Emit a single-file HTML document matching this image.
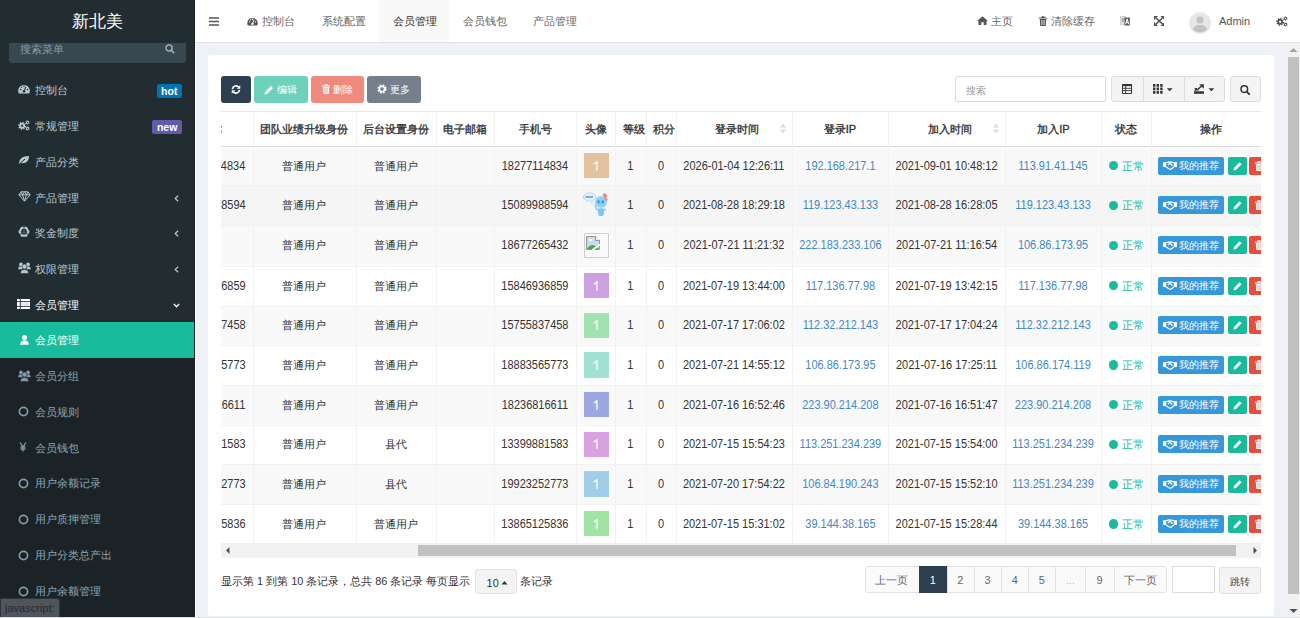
<!DOCTYPE html>
<html><head><meta charset="utf-8"><style>
*{box-sizing:border-box;margin:0;padding:0}
html,body{width:1300px;height:618px;overflow:hidden;background:#eef1f5;font-family:"Liberation Sans",sans-serif;font-size:12px;color:#333}
.a{position:absolute;white-space:nowrap}
#side{position:absolute;left:0;top:0;width:195px;height:618px;background:#222d32;overflow:hidden}
#side .edge{position:absolute;left:194px;top:0;width:1px;height:618px;background:#1a1f22}
#logo{position:absolute;left:0;top:0;width:194px;height:43px;background:#222d32;color:#fff;font-size:17px;text-align:center;line-height:43px;z-index:2}
#sbox{position:absolute;left:9px;top:33px;width:177px;height:30px;background:#374850;border-radius:3px}
.mi{position:absolute;left:0;width:194px;height:36px;color:#b8c7ce;font-size:11.4px}
.mi .t{position:absolute;left:35px;top:11px;line-height:14px}
.mi svg{position:absolute;left:18px;top:12px}
.sub{position:absolute;left:0;top:322px;width:194px;height:296px;background:#1c2326}
.badge{position:absolute;color:#fff;font-weight:bold;font-size:10.5px;line-height:14px;height:14px;border-radius:2px;text-align:center}
.chev{position:absolute;left:172px;top:14px}
#head{position:absolute;left:195px;top:0;width:1105px;height:43px;background:#fff;border-bottom:1px solid #dfe3e8}
.nav{position:absolute;top:13px;line-height:16px;color:#666;font-size:11.4px}
#content{position:absolute;left:195px;top:43px;width:1093px;height:575px;background:#eef1f5;border-left:1px solid #fff;overflow:hidden}
#panel{position:absolute;left:12px;top:12px;width:1066px;height:561px;background:#fff;border-radius:3px}
#vscroll{position:absolute;left:1286px;top:43px;width:14px;height:575px;background:#f1f1f1}
.th{font-weight:normal;-webkit-text-stroke:0.35px #333;text-align:center;font-size:11px;line-height:14px;color:#333}
.td{text-align:center;font-size:10.9px;line-height:14px;color:#333}
.pg{color:#666}
.num{font-size:12px;transform:scaleX(0.915);transform-origin:50% 50%}
</style></head><body>
<div id="side">
<div id="logo">新北美</div>
<div id="sbox"><span class="a" style="left:11px;top:9.5px;color:#8d9ca4;font-size:10.8px;line-height:12px">搜索菜单</span><svg class="a" style="left:156px;top:11px" width="10" height="10" viewBox="0 0 10 10"><circle cx="4" cy="4" r="3.1" fill="none" stroke="#aab7bd" stroke-width="1.3"/><path d="M6.3 6.3L9.2 9.2" stroke="#aab7bd" stroke-width="1.6"/></svg></div>
<div class="mi" style="top:71px;color:#b8c7ce"><div class="a" style="left:0;top:1px;width:40px;height:36px"><svg width="12" height="10" viewBox="0 0 12 10"><path d="M0.8 9.4A5.8 5.8 0 1 1 11.2 9.4Z" fill="#b8c7ce"/><circle cx="6" cy="7.3" r="1.3" fill="#222d32"/><path d="M6 7.3L7.8 2.8" stroke="#222d32" stroke-width="1"/><circle cx="2.6" cy="5.6" r=".75" fill="#222d32"/><circle cx="9.4" cy="5.6" r=".75" fill="#222d32"/><circle cx="6" cy="2.2" r=".75" fill="#222d32"/><circle cx="3.6" cy="3.2" r=".6" fill="#222d32"/></svg></div><span class="t" style="top:12px">控制台</span></div>
<div class="mi" style="top:107px;color:#b8c7ce"><div class="a" style="left:0;top:0.5px;width:40px;height:36px"><svg width="12" height="11" viewBox="0 0 12.5 11"><path d="M7.40 5.80L8.58 6.20L8.30 7.38L7.06 7.21L6.49 7.99L7.04 9.11L6.01 9.75L5.26 8.75L4.30 8.90L3.90 10.08L2.72 9.80L2.89 8.56L2.11 7.99L0.99 8.54L0.35 7.51L1.35 6.76L1.20 5.80L0.02 5.40L0.30 4.22L1.54 4.39L2.11 3.61L1.56 2.49L2.59 1.85L3.34 2.85L4.30 2.70L4.70 1.52L5.88 1.80L5.71 3.04L6.49 3.61L7.61 3.06L8.25 4.09L7.25 4.84ZM5.50 5.80A1.2 1.2 0 1 0 3.10 5.80A1.2 1.2 0 1 0 5.50 5.80ZM11.45 2.30L12.18 2.59L11.92 3.41L11.15 3.21L10.68 3.64L10.79 4.42L9.95 4.60L9.74 3.84L9.12 3.64L8.51 4.13L7.93 3.49L8.48 2.93L8.35 2.30L7.62 2.01L7.88 1.19L8.65 1.39L9.12 0.96L9.01 0.18L9.85 0.00L10.06 0.76L10.67 0.96L11.29 0.47L11.87 1.11L11.32 1.67ZM10.50 2.30A0.6 0.6 0 1 0 9.30 2.30A0.6 0.6 0 1 0 10.50 2.30ZM11.45 8.50L12.18 8.79L11.92 9.61L11.15 9.41L10.68 9.84L10.79 10.62L9.95 10.80L9.74 10.04L9.12 9.84L8.51 10.33L7.93 9.69L8.48 9.13L8.35 8.50L7.62 8.21L7.88 7.39L8.65 7.59L9.12 7.16L9.01 6.38L9.85 6.20L10.06 6.96L10.67 7.16L11.29 6.67L11.87 7.31L11.32 7.87ZM10.50 8.50A0.6 0.6 0 1 0 9.30 8.50A0.6 0.6 0 1 0 10.50 8.50Z" fill="#b8c7ce" fill-rule="evenodd"/></svg></div><span class="t" style="top:12px">常规管理</span></div>
<div class="mi" style="top:143px;color:#b8c7ce"><div class="a" style="left:0;top:0px;width:40px;height:36px"><svg width="12" height="10" viewBox="0 0 12 10"><path d="M1 9C1 4 4 1 11 1C11 6 8 9 3 8Z" fill="#b8c7ce"/><path d="M1.5 9L7 4" stroke="#222d32" stroke-width="1"/></svg></div><span class="t" style="top:12px">产品分类</span></div>
<div class="mi" style="top:179px;color:#b8c7ce"><div class="a" style="left:0;top:0px;width:40px;height:36px"><svg width="13" height="11" viewBox="0 0 13 11"><path d="M3 .8H10L12.2 3.8L6.5 10.2L.8 3.8Z M.8 3.8H12.2 M4.5 3.8L6.5 10 L8.5 3.8 M3 .8L4.5 3.8L6.5 .8L8.5 3.8L10 .8" fill="none" stroke="#b8c7ce" stroke-width="1"/></svg></div><span class="t" style="top:12px">产品管理</span></div>
<div class="mi" style="top:214px;color:#b8c7ce"><div class="a" style="left:0;top:1.5px;width:40px;height:36px"><svg width="12" height="12" viewBox="0 0 12 12" style="top:10.5px"><path d="M3.2 0.8H8.8L11.6 5.8L8.8 10.8H3.2L0.4 5.8Z M4.4 3H7.6L9.2 5.8L7.6 8.6H4.4L2.8 5.8Z" fill="#b8c7ce" fill-rule="evenodd"/><path d="M6 3.2L4 7.4H8Z" fill="#b8c7ce" opacity=".35"/><path d="M6 1L6 4M2 8.5L4.3 7M10 8.5L7.7 7" stroke="#222d32" stroke-width=".8"/></svg></div><span class="t" style="top:12px">奖金制度</span></div>
<div class="mi" style="top:250px;color:#b8c7ce"><div class="a" style="left:0;top:-0.5px;width:40px;height:36px"><svg width="13" height="12" viewBox="0 0 13 12" style="top:12.5px"><circle cx="3" cy="2.4" r="1.9" fill="#b8c7ce"/><circle cx="10" cy="2.4" r="1.9" fill="#b8c7ce"/><path d="M0.2 7.2C0.2 5 1 4.5 3 4.5S4.5 5 4.5 7.2Z M8.5 7.2C8.5 5 9 4.5 10 4.5S12.8 5 12.8 7.2Z" fill="#b8c7ce"/><circle cx="6.5" cy="4.6" r="2.5" fill="#b8c7ce" stroke="#222d32" stroke-width=".6"/><path d="M2.5 11.6C2.5 8.5 4 7.6 6.5 7.6S10.5 8.5 10.5 11.6Z" fill="#b8c7ce" stroke="#222d32" stroke-width=".6"/></svg></div><span class="t" style="top:12px">权限管理</span></div>
<div class="mi" style="top:286px;color:#fff"><div class="a" style="left:0;top:1px;width:40px;height:36px"><svg width="13" height="10" viewBox="0 0 13 10" style="left:17.2px"><path d="M0 0H13V10H0Z" fill="#fff"/><path d="M0 2.6H13M0 7.4H13M3.3 0V10" stroke="#222d32" stroke-width="0.9"/><path d="M4 5H12.5" stroke="#222d32" stroke-width=".5" opacity=".5"/></svg></div><span class="t" style="top:12px">会员管理</span></div>
<div class="badge" style="left:156.5px;top:84px;width:25.5px;background:#0073b7">hot</div>
<div class="badge" style="left:152.3px;top:120px;width:29.7px;background:#605ca8">new</div>
<svg class="a" style="left:174px;top:195px" width="5" height="7" viewBox="0 0 5 7"><path d="M4.2 .8L1.2 3.5L4.2 6.2" fill="none" stroke="#b8c7ce" stroke-width="1.2"/></svg>
<svg class="a" style="left:174px;top:230px" width="5" height="7" viewBox="0 0 5 7"><path d="M4.2 .8L1.2 3.5L4.2 6.2" fill="none" stroke="#b8c7ce" stroke-width="1.2"/></svg>
<svg class="a" style="left:174px;top:266px" width="5" height="7" viewBox="0 0 5 7"><path d="M4.2 .8L1.2 3.5L4.2 6.2" fill="none" stroke="#b8c7ce" stroke-width="1.2"/></svg>
<svg class="a" style="left:173px;top:303px" width="7" height="5" viewBox="0 0 7 5"><path d="M.8 .9L3.5 3.8L6.2 .9" fill="none" stroke="#fff" stroke-width="1.3"/></svg>
<div class="sub"></div>
<div class="a" style="left:0;top:322px;width:194px;height:36px;background:#18bc9c"></div>
<div class="mi" style="top:322.00px;color:#fff"><svg width="9" height="10" viewBox="0 0 9 10" style="left:19.5px;top:13px"><ellipse cx="4.5" cy="2.6" rx="2.5" ry="2.6" fill="#fff"/><path d="M0.2 9.8C0.2 6.5 1.5 5.5 4.5 5.5S8.8 6.5 8.8 9.8Z" fill="#fff"/></svg><span class="t">会员管理</span></div>
<div class="mi" style="top:357.86px;color:#8aa4af"><svg width="13" height="12" viewBox="0 0 13 12" style="top:12.5px"><circle cx="3" cy="2.4" r="1.9" fill="#7f9ba8"/><circle cx="10" cy="2.4" r="1.9" fill="#7f9ba8"/><path d="M0.2 7.2C0.2 5 1 4.5 3 4.5S4.5 5 4.5 7.2Z M8.5 7.2C8.5 5 9 4.5 10 4.5S12.8 5 12.8 7.2Z" fill="#7f9ba8"/><circle cx="6.5" cy="4.6" r="2.5" fill="#7f9ba8" stroke="#222d32" stroke-width=".6"/><path d="M2.5 11.6C2.5 8.5 4 7.6 6.5 7.6S10.5 8.5 10.5 11.6Z" fill="#7f9ba8" stroke="#222d32" stroke-width=".6"/></svg><span class="t">会员分组</span></div>
<div class="mi" style="top:393.72px;color:#8aa4af"><svg width="11" height="11" viewBox="0 0 11 11" style="top:12.5px;left:17.5px"><circle cx="5.5" cy="5.5" r="4.1" fill="none" stroke="#7f9ba8" stroke-width="1.7"/></svg><span class="t">会员规则</span></div>
<div class="mi" style="top:429.58px;color:#8aa4af"><svg width="10" height="10" viewBox="0 0 10 10"><path d="M2 .5L5 5L8 .5M5 5V9.5M2.5 5H7.5M2.5 7H7.5" fill="none" stroke="#7f9ba8" stroke-width="1.3"/></svg><span class="t">会员钱包</span></div>
<div class="mi" style="top:465.44px;color:#8aa4af"><svg width="11" height="11" viewBox="0 0 11 11" style="top:12.5px;left:17.5px"><circle cx="5.5" cy="5.5" r="4.1" fill="none" stroke="#7f9ba8" stroke-width="1.7"/></svg><span class="t">用户余额记录</span></div>
<div class="mi" style="top:501.30px;color:#8aa4af"><svg width="11" height="11" viewBox="0 0 11 11" style="top:12.5px;left:17.5px"><circle cx="5.5" cy="5.5" r="4.1" fill="none" stroke="#7f9ba8" stroke-width="1.7"/></svg><span class="t">用户质押管理</span></div>
<div class="mi" style="top:537.16px;color:#8aa4af"><svg width="11" height="11" viewBox="0 0 11 11" style="top:12.5px;left:17.5px"><circle cx="5.5" cy="5.5" r="4.1" fill="none" stroke="#7f9ba8" stroke-width="1.7"/></svg><span class="t">用户分类总产出</span></div>
<div class="mi" style="top:573.02px;color:#8aa4af"><svg width="11" height="11" viewBox="0 0 11 11" style="top:12.5px;left:17.5px"><circle cx="5.5" cy="5.5" r="4.1" fill="none" stroke="#7f9ba8" stroke-width="1.7"/></svg><span class="t">用户余额管理</span></div>
<div class="edge"></div>
</div>
<div class="a" style="left:0;top:598px;width:60px;height:20px;background:#50545b;border:1px solid #30343a;border-bottom:0;border-top-right-radius:3px;color:#262a30;font-size:11px;line-height:18px;padding-left:4px;z-index:10">javascript:</div>
<div class="a" style="left:0;top:617px;width:1300px;height:1px;background:#dcdfe2;z-index:11"></div>
<div id="head">
<svg class="a" style="left:14px;top:17px" width="10" height="9" viewBox="0 0 10 9"><path d="M0 1H10M0 4.5H10M0 8H10" stroke="#555" stroke-width="1.6"/></svg>
<svg class="a" style="left:52px;top:17px" width="11" height="9" viewBox="0 0 12 10"><path d="M0.8 9.4A5.8 5.8 0 1 1 11.2 9.4Z" fill="#555"/><circle cx="6" cy="7.6" r="1.3" fill="#fff"/><path d="M6 7.5L7.8 3" stroke="#fff" stroke-width="1"/><circle cx="2.8" cy="5.4" r=".8" fill="#fff"/><circle cx="9.2" cy="5.4" r=".8" fill="#fff"/><circle cx="6" cy="2.4" r=".8" fill="#fff"/><circle cx="3.8" cy="3.2" r=".6" fill="#fff"/></svg>
<div class="a" style="left:184px;top:0;width:70px;height:42px;background:#f9f9f9"></div>
<div class="nav a" style="left:67px;color:#666">控制台</div>
<div class="nav a" style="left:127px;color:#666">系统配置</div>
<div class="nav a" style="left:198px;color:#333">会员管理</div>
<div class="nav a" style="left:268px;color:#666">会员钱包</div>
<div class="nav a" style="left:338px;color:#666">产品管理</div>
<svg class="a" style="left:782px;top:16px" width="11" height="9" viewBox="0 0 11 9"><path d="M5.5 0.3L0 5H1.5V9H4.3V6.2H6.7V9H9.5V5H11Z" fill="#555"/></svg>
<div class="nav a" style="left:796px">主页</div>
<svg class="a" style="left:844px;top:16px" width="8" height="10" viewBox="0 0 8 10"><path d="M0 1.5H8V2.6H0Z M2.5 0.3H5.5V1.5H2.5Z M0.8 3H7.2L6.8 10H1.2Z" fill="#555"/><path d="M2.7 4V9M4 4V9M5.3 4V9" stroke="#fff" stroke-width=".6"/></svg>
<div class="nav a" style="left:856px">清除缓存</div>
<svg class="a" style="left:924.5px;top:15.3px" width="10" height="11" viewBox="0 0 10 11"><path d="M0.3 1.5H5.5V9.5H0.3Z" fill="#e2e2e2" stroke="#bbb" stroke-width=".6"/><path d="M1.5 4H4.3M2.9 3V7M1.6 7L4.2 5" stroke="#888" stroke-width=".7" fill="none"/><path d="M4.5 2.5H9.8V10.5H4.5Z" fill="#555"/><path d="M3 0.3L5 2.5" stroke="#bbb" stroke-width=".6"/><path d="M5.6 9.3L7.15 3.8L8.7 9.3M6.1 7.6H8.2" fill="none" stroke="#fff" stroke-width="1"/></svg>
<svg class="a" style="left:958.8px;top:16px" width="10.5" height="10" viewBox="0 0 10.5 10"><path d="M2 2L8.5 8M8.5 2L2 8" stroke="#555" stroke-width="1.7"/><path d="M0 0H4.2L0 4Z M10.5 0V4L6.3 0Z M0 10V6L4.2 10Z M10.5 10H6.3L10.5 6Z" fill="#555"/></svg>
<svg class="a" style="left:994px;top:12px" width="22" height="22" viewBox="0 0 22 22"><circle cx="11" cy="11" r="10.8" fill="#e6e6e6"/><circle cx="11" cy="8" r="3.6" fill="#c2c2c2"/><path d="M3.8 17.5C5 13.8 8 13 11 13S17 13.8 18.2 17.5A10.8 10.8 0 0 1 3.8 17.5Z" fill="#c2c2c2"/></svg>
<div class="a" style="left:1024px;top:13px;line-height:16px;font-size:11px;color:#555">Admin</div>
<div class="a" style="left:1080.5px;top:15.5px"><svg width="12" height="11" viewBox="0 0 12.5 11"><path d="M7.40 5.80L8.58 6.20L8.30 7.38L7.06 7.21L6.49 7.99L7.04 9.11L6.01 9.75L5.26 8.75L4.30 8.90L3.90 10.08L2.72 9.80L2.89 8.56L2.11 7.99L0.99 8.54L0.35 7.51L1.35 6.76L1.20 5.80L0.02 5.40L0.30 4.22L1.54 4.39L2.11 3.61L1.56 2.49L2.59 1.85L3.34 2.85L4.30 2.70L4.70 1.52L5.88 1.80L5.71 3.04L6.49 3.61L7.61 3.06L8.25 4.09L7.25 4.84ZM5.50 5.80A1.2 1.2 0 1 0 3.10 5.80A1.2 1.2 0 1 0 5.50 5.80ZM11.45 2.30L12.18 2.59L11.92 3.41L11.15 3.21L10.68 3.64L10.79 4.42L9.95 4.60L9.74 3.84L9.12 3.64L8.51 4.13L7.93 3.49L8.48 2.93L8.35 2.30L7.62 2.01L7.88 1.19L8.65 1.39L9.12 0.96L9.01 0.18L9.85 0.00L10.06 0.76L10.67 0.96L11.29 0.47L11.87 1.11L11.32 1.67ZM10.50 2.30A0.6 0.6 0 1 0 9.30 2.30A0.6 0.6 0 1 0 10.50 2.30ZM11.45 8.50L12.18 8.79L11.92 9.61L11.15 9.41L10.68 9.84L10.79 10.62L9.95 10.80L9.74 10.04L9.12 9.84L8.51 10.33L7.93 9.69L8.48 9.13L8.35 8.50L7.62 8.21L7.88 7.39L8.65 7.59L9.12 7.16L9.01 6.38L9.85 6.20L10.06 6.96L10.67 7.16L11.29 6.67L11.87 7.31L11.32 7.87ZM10.50 8.50A0.6 0.6 0 1 0 9.30 8.50A0.6 0.6 0 1 0 10.50 8.50Z" fill="#555" fill-rule="evenodd"/></svg></div>
</div>
<div id="content"><div id="panel">
<div class="a" style="left:13px;top:21px;width:30px;height:26.5px;background:#2c3e50;border-radius:3px;"><svg class="a" style="left:9.6px;top:8.8px" width="10" height="9" viewBox="0 0 11 10"><path d="M1.5 4.5A4 4 0 0 1 8.6 2.6" fill="none" stroke="#fff" stroke-width="1.8"/><path d="M10.2 0.3V4.2H6.3Z" fill="#fff"/><path d="M9.5 5.5A4 4 0 0 1 2.4 7.4" fill="none" stroke="#fff" stroke-width="1.8"/><path d="M0.8 9.7V5.8H4.7Z" fill="#fff"/></svg></div>
<div class="a" style="left:46px;top:21px;width:54px;height:26.5px;background:#6dd1bc;border-radius:3px;"><svg class="a" style="left:10px;top:9px" width="10" height="10" viewBox="0 0 10 10"><path d="M0.5 9.5L1 7L7 1L9 3L3 9Z" fill="#fff"/></svg><span class="a" style="left:23px;top:6.5px;color:#fff;font-size:10.3px;line-height:14px">编辑</span></div>
<div class="a" style="left:103px;top:21px;width:53px;height:26.5px;background:#f0897e;border-radius:3px;"><svg class="a" style="left:11px;top:8px" width="8" height="10" viewBox="0 0 8 10"><path d="M0 1.5H8V2.6H0Z M2.5 0.3H5.5V1.5H2.5Z M0.8 3H7.2L6.8 10H1.2Z" fill="#fff"/><path d="M2.7 4V9M4 4V9M5.3 4V9" stroke="#f0897e" stroke-width=".6"/></svg><span class="a" style="left:22px;top:6.5px;color:#fff;font-size:10.3px;line-height:14px">删除</span></div>
<div class="a" style="left:159px;top:21px;width:54px;height:26.5px;background:#76808c;border-radius:3px;"><svg class="a" style="left:10px;top:8px" width="10" height="10" viewBox="0 0 10 10"><circle cx="5" cy="5" r="3.3" fill="none" stroke="#fff" stroke-width="2.6" stroke-dasharray="1.6 1"/><circle cx="5" cy="5" r="2.6" fill="none" stroke="#fff" stroke-width="1.4"/></svg><span class="a" style="left:23px;top:6.5px;color:#fff;font-size:10.3px;line-height:14px">更多</span></div>
<div class="a" style="left:746.8px;top:21.200000000000003px;width:151.6px;height:26.1px;border:1px solid #d6dbe3;border-radius:2px;background:#fff"><span class="a" style="left:10.3px;top:7.5px;color:#999;font-size:10.3px;line-height:12px">搜索</span></div>
<div class="a" style="left:902.5px;top:21.299999999999997px;width:114px;height:26.2px;border:1px solid #ddd;background:#f4f4f4;border-radius:3px"></div>
<div class="a" style="left:934.5px;top:21.299999999999997px;width:1px;height:26px;background:#ddd"></div>
<div class="a" style="left:975.5px;top:21.299999999999997px;width:1px;height:26px;background:#ddd"></div>
<svg class="a" style="left:914.3px;top:29px" width="10" height="10" viewBox="0 0 10 10"><path d="M0.5 0.5H9.5V9.5H0.5Z" fill="none" stroke="#333" stroke-width="1"/><path d="M0.5 1.2H9.5" stroke="#333" stroke-width="1.8"/><path d="M1 4.3H9M1 6.6H9M3.6 2V9" stroke="#333" stroke-width=".9"/></svg>
<svg class="a" style="left:944.7px;top:29.299999999999997px" width="20" height="10" viewBox="0 0 20 10"><path d="M0 0H2.4V2.8H0ZM3.6 0H6V2.8H3.6ZM7.2 0H9.6V2.8H7.2ZM0 3.5H2.4V6.3H0ZM3.6 3.5H6V6.3H3.6ZM7.2 3.5H9.6V6.3H7.2ZM0 7H2.4V9.8H0ZM3.6 7H6V9.8H3.6ZM7.2 7H9.6V9.8H7.2Z" fill="#333"/><path d="M13.8 4.3H19.6L16.7 7.3Z" fill="#333"/></svg>
<svg class="a" style="left:985.5999999999999px;top:29.200000000000003px" width="21" height="10" viewBox="0 0 21 10"><path d="M0 7.3H10V9.8H0Z" fill="#333"/><path d="M1.3 7.3V4.5H2.6V6H4.5" fill="none" stroke="#333" stroke-width="1.1"/><path d="M3.5 5.8L7.8 1.8" stroke="#333" stroke-width="1.5"/><path d="M5.2 0.2H9.8V4.8Z" fill="#333"/><path d="M14.5 4.3H20.3L17.4 7.3Z" fill="#333"/></svg>
<div class="a" style="left:1021.5px;top:21.299999999999997px;width:31.5px;height:26.2px;border:1px solid #ddd;background:#f4f4f4;border-radius:3px"><svg class="a" style="left:9.3px;top:8.1px" width="11" height="10" viewBox="0 0 11 10"><circle cx="4.3" cy="4.1" r="3.3" fill="none" stroke="#333" stroke-width="1.5"/><path d="M6.6 6.6L9.8 9.6" stroke="#333" stroke-width="1.9"/></svg></div>
<div class="a" style="left:13px;top:56px;width:1040px;height:432px;overflow:hidden">
<div class="a" style="left:0;top:0;width:1040px;height:1px;background:#e8e8e8"></div>
<div class="a" style="left:0;top:35.00px;width:1040px;height:39.00px;background:#f9f9f9;border-top:1px solid #f1f1f1"></div>
<div class="a" style="left:0;top:74.00px;width:1040px;height:40.30px;background:#f5f5f5;border-top:1px solid #f1f1f1"></div>
<div class="a" style="left:0;top:114.30px;width:1040px;height:40.20px;background:#f9f9f9;border-top:1px solid #f1f1f1"></div>
<div class="a" style="left:0;top:154.50px;width:1040px;height:40.00px;background:#fff;border-top:1px solid #f1f1f1"></div>
<div class="a" style="left:0;top:194.50px;width:1040px;height:39.80px;background:#f9f9f9;border-top:1px solid #f1f1f1"></div>
<div class="a" style="left:0;top:234.30px;width:1040px;height:39.30px;background:#fff;border-top:1px solid #f1f1f1"></div>
<div class="a" style="left:0;top:273.60px;width:1040px;height:39.90px;background:#f9f9f9;border-top:1px solid #f1f1f1"></div>
<div class="a" style="left:0;top:313.50px;width:1040px;height:39.70px;background:#fff;border-top:1px solid #f1f1f1"></div>
<div class="a" style="left:0;top:353.20px;width:1040px;height:39.80px;background:#f9f9f9;border-top:1px solid #f1f1f1"></div>
<div class="a" style="left:0;top:393.00px;width:1040px;height:39.60px;background:#fff;border-top:1px solid #f1f1f1"></div>
<div class="a" style="left:0;top:34.5px;width:1040px;height:1.5px;background:#dcdcdc"></div>
<div class="a" style="left:32.2px;top:0;width:1px;height:432px;background:#f2f2f2"></div>
<div class="a" style="left:134.5px;top:0;width:1px;height:432px;background:#f2f2f2"></div>
<div class="a" style="left:215.2px;top:0;width:1px;height:432px;background:#f2f2f2"></div>
<div class="a" style="left:273.4px;top:0;width:1px;height:432px;background:#f2f2f2"></div>
<div class="a" style="left:355.2px;top:0;width:1px;height:432px;background:#f2f2f2"></div>
<div class="a" style="left:394.4px;top:0;width:1px;height:432px;background:#f2f2f2"></div>
<div class="a" style="left:424.8px;top:0;width:1px;height:432px;background:#f2f2f2"></div>
<div class="a" style="left:454.7px;top:0;width:1px;height:432px;background:#f2f2f2"></div>
<div class="a" style="left:570.5px;top:0;width:1px;height:432px;background:#f2f2f2"></div>
<div class="a" style="left:667.3px;top:0;width:1px;height:432px;background:#f2f2f2"></div>
<div class="a" style="left:784.4px;top:0;width:1px;height:432px;background:#f2f2f2"></div>
<div class="a" style="left:880.4px;top:0;width:1px;height:432px;background:#f2f2f2"></div>
<div class="a" style="left:929.6px;top:0;width:1px;height:432px;background:#f2f2f2"></div>
<div class="a th" style="left:-21px;top:11px;text-align:left">昵称</div>
<div class="a th" style="left:32.2px;top:11px;width:102.3px">团队业绩升级身份</div>
<div class="a th" style="left:134.5px;top:11px;width:80.7px">后台设置身份</div>
<div class="a th" style="left:215.2px;top:11px;width:58.2px">电子邮箱</div>
<div class="a th" style="left:273.4px;top:11px;width:81.8px">手机号</div>
<div class="a th" style="left:355.2px;top:11px;width:39.2px">头像</div>
<div class="a th" style="left:401.9px;top:11px;text-align:left">等级</div>
<div class="a th" style="left:432.3px;top:11px;text-align:left">积分</div>
<div class="a th" style="left:457.7px;top:11px;width:115.8px">登录时间</div>
<div class="a th" style="left:570.5px;top:11px;width:96.8px">登录IP</div>
<div class="a th" style="left:670.3px;top:11px;width:117.1px">加入时间</div>
<div class="a th" style="left:784.4px;top:11px;width:96.0px">加入IP</div>
<div class="a th" style="left:880.4px;top:11px;width:49.2px">状态</div>
<div class="a th" style="left:929.6px;top:11px;width:121.4px">操作</div>
<svg class="a" style="left:559px;top:12px" width="6" height="11" viewBox="0 0 6 11"><path d="M0 4.5L3 0.5L6 4.5Z M0 6.5L3 10.5L6 6.5Z" fill="#dcdcdc"/></svg>
<svg class="a" style="left:772px;top:12px" width="6" height="11" viewBox="0 0 6 11"><path d="M0 4.5L3 0.5L6 4.5Z M0 6.5L3 10.5L6 6.5Z" fill="#dcdcdc"/></svg>
<div class="a td num" style="left:-50.0px;top:47.5px;width:82.2px;">18277114834</div>
<div class="a td" style="left:32.2px;top:47.5px;width:102.3px;">普通用户</div>
<div class="a td" style="left:134.5px;top:47.5px;width:80.7px;">普通用户</div>
<div class="a td num" style="left:273.4px;top:47.5px;width:81.8px;">18277114834</div>
<div class="a td num" style="left:394.4px;top:47.5px;width:30.4px;">1</div>
<div class="a td num" style="left:424.8px;top:47.5px;width:29.9px;">0</div>
<div class="a td num" style="left:454.7px;top:47.5px;width:115.8px;">2026-01-04 12:26:11</div>
<div class="a td num" style="left:570.5px;top:47.5px;width:96.8px;color:#4288c2">192.168.217.1</div>
<div class="a td num" style="left:667.3px;top:47.5px;width:117.1px;">2021-09-01 10:48:12</div>
<div class="a td num" style="left:784.4px;top:47.5px;width:96.0px;color:#4288c2">113.91.41.145</div>
<div class="a" style="left:362.6px;top:41.8px;width:25.4px;height:25.4px;background:#e2c19e"><svg class="a" style="left:9.5px;top:7.8px" width="6" height="10" viewBox="0 0 6 10"><path d="M3.3 0.2H4.6V9.8H3.3V2.2Q2.3 3.2 0.6 3.6V2.4Q2.4 1.7 3.3 0.2Z" fill="#fff"/></svg></div>
<div class="a" style="left:887.6px;top:49.9px;width:9.4px;height:9.4px;border-radius:50%;background:#18bc9c"></div>
<div class="a td" style="left:900.5px;top:47.5px;color:#18bc9c">正常</div>
<div class="a" style="left:937.0px;top:45.5px;width:66px;height:18px;background:#3498db;border-radius:2px"><svg class="a" style="left:5px;top:4.5px" width="14" height="9" viewBox="0 0 14 9"><path d="M0 1.2H2.5V6H0Z M11.5 1.2H14V6H11.5Z" fill="#fff"/><path d="M2.5 2L5.5 0.8L8.5 1.2L11.5 2V5.5L8 8.2H6.5L2.5 5.5Z" fill="none" stroke="#fff" stroke-width="1.3"/><path d="M4.8 4L7 2L9.5 4.8" fill="none" stroke="#fff" stroke-width="1.2"/></svg><span class="a" style="left:20.8px;top:2.3px;color:#fff;font-size:10.3px;line-height:14px">我的推荐</span></div>
<div class="a" style="left:1006.5px;top:45.5px;width:19px;height:18px;background:#18bc9c;border-radius:2px"><svg class="a" style="left:5px;top:4px" width="9" height="10" viewBox="0 0 9 10"><path d="M0.5 9.5L1 7L6.5 1.3L8.5 3.3L3 9Z" fill="#fff"/></svg></div>
<div class="a" style="left:1028.0px;top:45.5px;width:19px;height:18px;background:#e74c3c;border-radius:2px"><svg class="a" style="left:5.5px;top:4px" width="8" height="10" viewBox="0 0 8 10"><path d="M0 1.5H8V2.6H0Z M2.5 0.3H5.5V1.5H2.5Z M0.8 3H7.2L6.8 10H1.2Z" fill="#fff"/><path d="M2.7 4V9M4 4V9M5.3 4V9" stroke="#f0a090" stroke-width=".7"/></svg></div>
<div class="a td num" style="left:-50.0px;top:87.2px;width:82.2px;">15089988594</div>
<div class="a td" style="left:32.2px;top:87.2px;width:102.3px;">普通用户</div>
<div class="a td" style="left:134.5px;top:87.2px;width:80.7px;">普通用户</div>
<div class="a td num" style="left:273.4px;top:87.2px;width:81.8px;">15089988594</div>
<div class="a td num" style="left:394.4px;top:87.2px;width:30.4px;">1</div>
<div class="a td num" style="left:424.8px;top:87.2px;width:29.9px;">0</div>
<div class="a td num" style="left:454.7px;top:87.2px;width:115.8px;">2021-08-28 18:29:18</div>
<div class="a td num" style="left:570.5px;top:87.2px;width:96.8px;color:#4288c2">119.123.43.133</div>
<div class="a td num" style="left:667.3px;top:87.2px;width:117.1px;">2021-08-28 16:28:05</div>
<div class="a td num" style="left:784.4px;top:87.2px;width:96.0px;color:#4288c2">119.123.43.133</div>
<svg class="a" style="left:359.0px;top:78.2px" width="32" height="32" viewBox="0 0 32 32"><ellipse cx="9.5" cy="8" rx="6" ry="4.2" fill="#e3f1fb" stroke="#a9d2ef" stroke-width=".8"/><path d="M5.5 8H13" stroke="#3a6fd8" stroke-width="1.1"/><circle cx="12" cy="13.5" r="1.2" fill="#cfe6f8"/><circle cx="13.5" cy="16" r=".8" fill="#cfe6f8"/><circle cx="21" cy="13" r="6" fill="#8fd0f5" stroke="#bfe5fa" stroke-width=".8"/><ellipse cx="18.5" cy="12.8" rx="1.2" ry="1.6" fill="#3a8de0"/><ellipse cx="22.8" cy="12.8" rx="1.2" ry="1.6" fill="#3a8de0"/><path d="M22.5 5.5L25 4L27.5 7L26 8.5L28 11L26 12L24.5 9Z" fill="#e8857c"/><path d="M17.5 20Q21 18.5 24.5 20L23.5 26.5Q21 28 18.5 26.5Z" fill="#7cc6f2"/><path d="M16 21L18 20M26 21L24 20M15.5 15.5Q15 19 17 20" stroke="#8fd0f5" stroke-width="1.6" fill="none"/></svg>
<div class="a" style="left:887.6px;top:89.6px;width:9.4px;height:9.4px;border-radius:50%;background:#18bc9c"></div>
<div class="a td" style="left:900.5px;top:87.2px;color:#18bc9c">正常</div>
<div class="a" style="left:937.0px;top:85.2px;width:66px;height:18px;background:#3498db;border-radius:2px"><svg class="a" style="left:5px;top:4.5px" width="14" height="9" viewBox="0 0 14 9"><path d="M0 1.2H2.5V6H0Z M11.5 1.2H14V6H11.5Z" fill="#fff"/><path d="M2.5 2L5.5 0.8L8.5 1.2L11.5 2V5.5L8 8.2H6.5L2.5 5.5Z" fill="none" stroke="#fff" stroke-width="1.3"/><path d="M4.8 4L7 2L9.5 4.8" fill="none" stroke="#fff" stroke-width="1.2"/></svg><span class="a" style="left:20.8px;top:2.3px;color:#fff;font-size:10.3px;line-height:14px">我的推荐</span></div>
<div class="a" style="left:1006.5px;top:85.2px;width:19px;height:18px;background:#18bc9c;border-radius:2px"><svg class="a" style="left:5px;top:4px" width="9" height="10" viewBox="0 0 9 10"><path d="M0.5 9.5L1 7L6.5 1.3L8.5 3.3L3 9Z" fill="#fff"/></svg></div>
<div class="a" style="left:1028.0px;top:85.2px;width:19px;height:18px;background:#e74c3c;border-radius:2px"><svg class="a" style="left:5.5px;top:4px" width="8" height="10" viewBox="0 0 8 10"><path d="M0 1.5H8V2.6H0Z M2.5 0.3H5.5V1.5H2.5Z M0.8 3H7.2L6.8 10H1.2Z" fill="#fff"/><path d="M2.7 4V9M4 4V9M5.3 4V9" stroke="#f0a090" stroke-width=".7"/></svg></div>
<div class="a td num" style="left:-50.0px;top:127.4px;width:82.2px;"></div>
<div class="a td" style="left:32.2px;top:127.4px;width:102.3px;">普通用户</div>
<div class="a td" style="left:134.5px;top:127.4px;width:80.7px;">普通用户</div>
<div class="a td num" style="left:273.4px;top:127.4px;width:81.8px;">18677265432</div>
<div class="a td num" style="left:394.4px;top:127.4px;width:30.4px;">1</div>
<div class="a td num" style="left:424.8px;top:127.4px;width:29.9px;">0</div>
<div class="a td num" style="left:454.7px;top:127.4px;width:115.8px;">2021-07-21 11:21:32</div>
<div class="a td num" style="left:570.5px;top:127.4px;width:96.8px;color:#4288c2">222.183.233.106</div>
<div class="a td num" style="left:667.3px;top:127.4px;width:117.1px;">2021-07-21 11:16:54</div>
<div class="a td num" style="left:784.4px;top:127.4px;width:96.0px;color:#4288c2">106.86.173.95</div>
<div class="a" style="left:362.6px;top:121.6px;width:25.4px;height:25.8px;border:1px solid #cdcdcd;border-radius:1px;background:#fafafa"><svg class="a" style="left:1px;top:2px" width="15" height="14" viewBox="0 0 15 14"><path d="M0.5 0.5H9.5L13.5 4.5V13.5H0.5Z" fill="#c5dcf5" stroke="#8a8a8a" stroke-width=".9"/><path d="M9.5 0.5V4.5H13.5" fill="#fff" stroke="#8a8a8a" stroke-width=".9"/><ellipse cx="4.5" cy="4" rx="2" ry=".9" fill="#fff"/><path d="M0.9 13.1Q4 7.5 8.5 9.5L13.1 13.1Z" fill="#4cae3a"/><path d="M13.8 8.5L6.5 14" stroke="#fff" stroke-width="1.6"/></svg></div>
<div class="a" style="left:887.6px;top:129.8px;width:9.4px;height:9.4px;border-radius:50%;background:#18bc9c"></div>
<div class="a td" style="left:900.5px;top:127.4px;color:#18bc9c">正常</div>
<div class="a" style="left:937.0px;top:125.4px;width:66px;height:18px;background:#3498db;border-radius:2px"><svg class="a" style="left:5px;top:4.5px" width="14" height="9" viewBox="0 0 14 9"><path d="M0 1.2H2.5V6H0Z M11.5 1.2H14V6H11.5Z" fill="#fff"/><path d="M2.5 2L5.5 0.8L8.5 1.2L11.5 2V5.5L8 8.2H6.5L2.5 5.5Z" fill="none" stroke="#fff" stroke-width="1.3"/><path d="M4.8 4L7 2L9.5 4.8" fill="none" stroke="#fff" stroke-width="1.2"/></svg><span class="a" style="left:20.8px;top:2.3px;color:#fff;font-size:10.3px;line-height:14px">我的推荐</span></div>
<div class="a" style="left:1006.5px;top:125.4px;width:19px;height:18px;background:#18bc9c;border-radius:2px"><svg class="a" style="left:5px;top:4px" width="9" height="10" viewBox="0 0 9 10"><path d="M0.5 9.5L1 7L6.5 1.3L8.5 3.3L3 9Z" fill="#fff"/></svg></div>
<div class="a" style="left:1028.0px;top:125.4px;width:19px;height:18px;background:#e74c3c;border-radius:2px"><svg class="a" style="left:5.5px;top:4px" width="8" height="10" viewBox="0 0 8 10"><path d="M0 1.5H8V2.6H0Z M2.5 0.3H5.5V1.5H2.5Z M0.8 3H7.2L6.8 10H1.2Z" fill="#fff"/><path d="M2.7 4V9M4 4V9M5.3 4V9" stroke="#f0a090" stroke-width=".7"/></svg></div>
<div class="a td num" style="left:-50.0px;top:167.5px;width:82.2px;">15846936859</div>
<div class="a td" style="left:32.2px;top:167.5px;width:102.3px;">普通用户</div>
<div class="a td" style="left:134.5px;top:167.5px;width:80.7px;">普通用户</div>
<div class="a td num" style="left:273.4px;top:167.5px;width:81.8px;">15846936859</div>
<div class="a td num" style="left:394.4px;top:167.5px;width:30.4px;">1</div>
<div class="a td num" style="left:424.8px;top:167.5px;width:29.9px;">0</div>
<div class="a td num" style="left:454.7px;top:167.5px;width:115.8px;">2021-07-19 13:44:00</div>
<div class="a td num" style="left:570.5px;top:167.5px;width:96.8px;color:#4288c2">117.136.77.98</div>
<div class="a td num" style="left:667.3px;top:167.5px;width:117.1px;">2021-07-19 13:42:15</div>
<div class="a td num" style="left:784.4px;top:167.5px;width:96.0px;color:#4288c2">117.136.77.98</div>
<div class="a" style="left:362.6px;top:161.8px;width:25.4px;height:25.4px;background:#cba1e2"><svg class="a" style="left:9.5px;top:7.8px" width="6" height="10" viewBox="0 0 6 10"><path d="M3.3 0.2H4.6V9.8H3.3V2.2Q2.3 3.2 0.6 3.6V2.4Q2.4 1.7 3.3 0.2Z" fill="#fff"/></svg></div>
<div class="a" style="left:887.6px;top:169.9px;width:9.4px;height:9.4px;border-radius:50%;background:#18bc9c"></div>
<div class="a td" style="left:900.5px;top:167.5px;color:#18bc9c">正常</div>
<div class="a" style="left:937.0px;top:165.5px;width:66px;height:18px;background:#3498db;border-radius:2px"><svg class="a" style="left:5px;top:4.5px" width="14" height="9" viewBox="0 0 14 9"><path d="M0 1.2H2.5V6H0Z M11.5 1.2H14V6H11.5Z" fill="#fff"/><path d="M2.5 2L5.5 0.8L8.5 1.2L11.5 2V5.5L8 8.2H6.5L2.5 5.5Z" fill="none" stroke="#fff" stroke-width="1.3"/><path d="M4.8 4L7 2L9.5 4.8" fill="none" stroke="#fff" stroke-width="1.2"/></svg><span class="a" style="left:20.8px;top:2.3px;color:#fff;font-size:10.3px;line-height:14px">我的推荐</span></div>
<div class="a" style="left:1006.5px;top:165.5px;width:19px;height:18px;background:#18bc9c;border-radius:2px"><svg class="a" style="left:5px;top:4px" width="9" height="10" viewBox="0 0 9 10"><path d="M0.5 9.5L1 7L6.5 1.3L8.5 3.3L3 9Z" fill="#fff"/></svg></div>
<div class="a" style="left:1028.0px;top:165.5px;width:19px;height:18px;background:#e74c3c;border-radius:2px"><svg class="a" style="left:5.5px;top:4px" width="8" height="10" viewBox="0 0 8 10"><path d="M0 1.5H8V2.6H0Z M2.5 0.3H5.5V1.5H2.5Z M0.8 3H7.2L6.8 10H1.2Z" fill="#fff"/><path d="M2.7 4V9M4 4V9M5.3 4V9" stroke="#f0a090" stroke-width=".7"/></svg></div>
<div class="a td num" style="left:-50.0px;top:207.4px;width:82.2px;">15755837458</div>
<div class="a td" style="left:32.2px;top:207.4px;width:102.3px;">普通用户</div>
<div class="a td" style="left:134.5px;top:207.4px;width:80.7px;">普通用户</div>
<div class="a td num" style="left:273.4px;top:207.4px;width:81.8px;">15755837458</div>
<div class="a td num" style="left:394.4px;top:207.4px;width:30.4px;">1</div>
<div class="a td num" style="left:424.8px;top:207.4px;width:29.9px;">0</div>
<div class="a td num" style="left:454.7px;top:207.4px;width:115.8px;">2021-07-17 17:06:02</div>
<div class="a td num" style="left:570.5px;top:207.4px;width:96.8px;color:#4288c2">112.32.212.143</div>
<div class="a td num" style="left:667.3px;top:207.4px;width:117.1px;">2021-07-17 17:04:24</div>
<div class="a td num" style="left:784.4px;top:207.4px;width:96.0px;color:#4288c2">112.32.212.143</div>
<div class="a" style="left:362.6px;top:201.7px;width:25.4px;height:25.4px;background:#a1e2b1"><svg class="a" style="left:9.5px;top:7.8px" width="6" height="10" viewBox="0 0 6 10"><path d="M3.3 0.2H4.6V9.8H3.3V2.2Q2.3 3.2 0.6 3.6V2.4Q2.4 1.7 3.3 0.2Z" fill="#fff"/></svg></div>
<div class="a" style="left:887.6px;top:209.8px;width:9.4px;height:9.4px;border-radius:50%;background:#18bc9c"></div>
<div class="a td" style="left:900.5px;top:207.4px;color:#18bc9c">正常</div>
<div class="a" style="left:937.0px;top:205.4px;width:66px;height:18px;background:#3498db;border-radius:2px"><svg class="a" style="left:5px;top:4.5px" width="14" height="9" viewBox="0 0 14 9"><path d="M0 1.2H2.5V6H0Z M11.5 1.2H14V6H11.5Z" fill="#fff"/><path d="M2.5 2L5.5 0.8L8.5 1.2L11.5 2V5.5L8 8.2H6.5L2.5 5.5Z" fill="none" stroke="#fff" stroke-width="1.3"/><path d="M4.8 4L7 2L9.5 4.8" fill="none" stroke="#fff" stroke-width="1.2"/></svg><span class="a" style="left:20.8px;top:2.3px;color:#fff;font-size:10.3px;line-height:14px">我的推荐</span></div>
<div class="a" style="left:1006.5px;top:205.4px;width:19px;height:18px;background:#18bc9c;border-radius:2px"><svg class="a" style="left:5px;top:4px" width="9" height="10" viewBox="0 0 9 10"><path d="M0.5 9.5L1 7L6.5 1.3L8.5 3.3L3 9Z" fill="#fff"/></svg></div>
<div class="a" style="left:1028.0px;top:205.4px;width:19px;height:18px;background:#e74c3c;border-radius:2px"><svg class="a" style="left:5.5px;top:4px" width="8" height="10" viewBox="0 0 8 10"><path d="M0 1.5H8V2.6H0Z M2.5 0.3H5.5V1.5H2.5Z M0.8 3H7.2L6.8 10H1.2Z" fill="#fff"/><path d="M2.7 4V9M4 4V9M5.3 4V9" stroke="#f0a090" stroke-width=".7"/></svg></div>
<div class="a td num" style="left:-50.0px;top:247.0px;width:82.2px;">18883565773</div>
<div class="a td" style="left:32.2px;top:247.0px;width:102.3px;">普通用户</div>
<div class="a td" style="left:134.5px;top:247.0px;width:80.7px;">普通用户</div>
<div class="a td num" style="left:273.4px;top:247.0px;width:81.8px;">18883565773</div>
<div class="a td num" style="left:394.4px;top:247.0px;width:30.4px;">1</div>
<div class="a td num" style="left:424.8px;top:247.0px;width:29.9px;">0</div>
<div class="a td num" style="left:454.7px;top:247.0px;width:115.8px;">2021-07-21 14:55:12</div>
<div class="a td num" style="left:570.5px;top:247.0px;width:96.8px;color:#4288c2">106.86.173.95</div>
<div class="a td num" style="left:667.3px;top:247.0px;width:117.1px;">2021-07-16 17:25:11</div>
<div class="a td num" style="left:784.4px;top:247.0px;width:96.0px;color:#4288c2">106.86.174.119</div>
<div class="a" style="left:362.6px;top:241.3px;width:25.4px;height:25.4px;background:#a1e2d2"><svg class="a" style="left:9.5px;top:7.8px" width="6" height="10" viewBox="0 0 6 10"><path d="M3.3 0.2H4.6V9.8H3.3V2.2Q2.3 3.2 0.6 3.6V2.4Q2.4 1.7 3.3 0.2Z" fill="#fff"/></svg></div>
<div class="a" style="left:887.6px;top:249.4px;width:9.4px;height:9.4px;border-radius:50%;background:#18bc9c"></div>
<div class="a td" style="left:900.5px;top:247.0px;color:#18bc9c">正常</div>
<div class="a" style="left:937.0px;top:245.0px;width:66px;height:18px;background:#3498db;border-radius:2px"><svg class="a" style="left:5px;top:4.5px" width="14" height="9" viewBox="0 0 14 9"><path d="M0 1.2H2.5V6H0Z M11.5 1.2H14V6H11.5Z" fill="#fff"/><path d="M2.5 2L5.5 0.8L8.5 1.2L11.5 2V5.5L8 8.2H6.5L2.5 5.5Z" fill="none" stroke="#fff" stroke-width="1.3"/><path d="M4.8 4L7 2L9.5 4.8" fill="none" stroke="#fff" stroke-width="1.2"/></svg><span class="a" style="left:20.8px;top:2.3px;color:#fff;font-size:10.3px;line-height:14px">我的推荐</span></div>
<div class="a" style="left:1006.5px;top:245.0px;width:19px;height:18px;background:#18bc9c;border-radius:2px"><svg class="a" style="left:5px;top:4px" width="9" height="10" viewBox="0 0 9 10"><path d="M0.5 9.5L1 7L6.5 1.3L8.5 3.3L3 9Z" fill="#fff"/></svg></div>
<div class="a" style="left:1028.0px;top:245.0px;width:19px;height:18px;background:#e74c3c;border-radius:2px"><svg class="a" style="left:5.5px;top:4px" width="8" height="10" viewBox="0 0 8 10"><path d="M0 1.5H8V2.6H0Z M2.5 0.3H5.5V1.5H2.5Z M0.8 3H7.2L6.8 10H1.2Z" fill="#fff"/><path d="M2.7 4V9M4 4V9M5.3 4V9" stroke="#f0a090" stroke-width=".7"/></svg></div>
<div class="a td num" style="left:-50.0px;top:286.6px;width:82.2px;">18236816611</div>
<div class="a td" style="left:32.2px;top:286.6px;width:102.3px;">普通用户</div>
<div class="a td" style="left:134.5px;top:286.6px;width:80.7px;">普通用户</div>
<div class="a td num" style="left:273.4px;top:286.6px;width:81.8px;">18236816611</div>
<div class="a td num" style="left:394.4px;top:286.6px;width:30.4px;">1</div>
<div class="a td num" style="left:424.8px;top:286.6px;width:29.9px;">0</div>
<div class="a td num" style="left:454.7px;top:286.6px;width:115.8px;">2021-07-16 16:52:46</div>
<div class="a td num" style="left:570.5px;top:286.6px;width:96.8px;color:#4288c2">223.90.214.208</div>
<div class="a td num" style="left:667.3px;top:286.6px;width:117.1px;">2021-07-16 16:51:47</div>
<div class="a td num" style="left:784.4px;top:286.6px;width:96.0px;color:#4288c2">223.90.214.208</div>
<div class="a" style="left:362.6px;top:280.9px;width:25.4px;height:25.4px;background:#9ca8e2"><svg class="a" style="left:9.5px;top:7.8px" width="6" height="10" viewBox="0 0 6 10"><path d="M3.3 0.2H4.6V9.8H3.3V2.2Q2.3 3.2 0.6 3.6V2.4Q2.4 1.7 3.3 0.2Z" fill="#fff"/></svg></div>
<div class="a" style="left:887.6px;top:288.9px;width:9.4px;height:9.4px;border-radius:50%;background:#18bc9c"></div>
<div class="a td" style="left:900.5px;top:286.6px;color:#18bc9c">正常</div>
<div class="a" style="left:937.0px;top:284.6px;width:66px;height:18px;background:#3498db;border-radius:2px"><svg class="a" style="left:5px;top:4.5px" width="14" height="9" viewBox="0 0 14 9"><path d="M0 1.2H2.5V6H0Z M11.5 1.2H14V6H11.5Z" fill="#fff"/><path d="M2.5 2L5.5 0.8L8.5 1.2L11.5 2V5.5L8 8.2H6.5L2.5 5.5Z" fill="none" stroke="#fff" stroke-width="1.3"/><path d="M4.8 4L7 2L9.5 4.8" fill="none" stroke="#fff" stroke-width="1.2"/></svg><span class="a" style="left:20.8px;top:2.3px;color:#fff;font-size:10.3px;line-height:14px">我的推荐</span></div>
<div class="a" style="left:1006.5px;top:284.6px;width:19px;height:18px;background:#18bc9c;border-radius:2px"><svg class="a" style="left:5px;top:4px" width="9" height="10" viewBox="0 0 9 10"><path d="M0.5 9.5L1 7L6.5 1.3L8.5 3.3L3 9Z" fill="#fff"/></svg></div>
<div class="a" style="left:1028.0px;top:284.6px;width:19px;height:18px;background:#e74c3c;border-radius:2px"><svg class="a" style="left:5.5px;top:4px" width="8" height="10" viewBox="0 0 8 10"><path d="M0 1.5H8V2.6H0Z M2.5 0.3H5.5V1.5H2.5Z M0.8 3H7.2L6.8 10H1.2Z" fill="#fff"/><path d="M2.7 4V9M4 4V9M5.3 4V9" stroke="#f0a090" stroke-width=".7"/></svg></div>
<div class="a td num" style="left:-50.0px;top:326.4px;width:82.2px;">13399881583</div>
<div class="a td" style="left:32.2px;top:326.4px;width:102.3px;">普通用户</div>
<div class="a td" style="left:134.5px;top:326.4px;width:80.7px;">县代</div>
<div class="a td num" style="left:273.4px;top:326.4px;width:81.8px;">13399881583</div>
<div class="a td num" style="left:394.4px;top:326.4px;width:30.4px;">1</div>
<div class="a td num" style="left:424.8px;top:326.4px;width:29.9px;">0</div>
<div class="a td num" style="left:454.7px;top:326.4px;width:115.8px;">2021-07-15 15:54:23</div>
<div class="a td num" style="left:570.5px;top:326.4px;width:96.8px;color:#4288c2">113.251.234.239</div>
<div class="a td num" style="left:667.3px;top:326.4px;width:117.1px;">2021-07-15 15:54:00</div>
<div class="a td num" style="left:784.4px;top:326.4px;width:96.0px;color:#4288c2">113.251.234.239</div>
<div class="a" style="left:362.6px;top:320.7px;width:25.4px;height:25.4px;background:#d9a1e2"><svg class="a" style="left:9.5px;top:7.8px" width="6" height="10" viewBox="0 0 6 10"><path d="M3.3 0.2H4.6V9.8H3.3V2.2Q2.3 3.2 0.6 3.6V2.4Q2.4 1.7 3.3 0.2Z" fill="#fff"/></svg></div>
<div class="a" style="left:887.6px;top:328.8px;width:9.4px;height:9.4px;border-radius:50%;background:#18bc9c"></div>
<div class="a td" style="left:900.5px;top:326.4px;color:#18bc9c">正常</div>
<div class="a" style="left:937.0px;top:324.4px;width:66px;height:18px;background:#3498db;border-radius:2px"><svg class="a" style="left:5px;top:4.5px" width="14" height="9" viewBox="0 0 14 9"><path d="M0 1.2H2.5V6H0Z M11.5 1.2H14V6H11.5Z" fill="#fff"/><path d="M2.5 2L5.5 0.8L8.5 1.2L11.5 2V5.5L8 8.2H6.5L2.5 5.5Z" fill="none" stroke="#fff" stroke-width="1.3"/><path d="M4.8 4L7 2L9.5 4.8" fill="none" stroke="#fff" stroke-width="1.2"/></svg><span class="a" style="left:20.8px;top:2.3px;color:#fff;font-size:10.3px;line-height:14px">我的推荐</span></div>
<div class="a" style="left:1006.5px;top:324.4px;width:19px;height:18px;background:#18bc9c;border-radius:2px"><svg class="a" style="left:5px;top:4px" width="9" height="10" viewBox="0 0 9 10"><path d="M0.5 9.5L1 7L6.5 1.3L8.5 3.3L3 9Z" fill="#fff"/></svg></div>
<div class="a" style="left:1028.0px;top:324.4px;width:19px;height:18px;background:#e74c3c;border-radius:2px"><svg class="a" style="left:5.5px;top:4px" width="8" height="10" viewBox="0 0 8 10"><path d="M0 1.5H8V2.6H0Z M2.5 0.3H5.5V1.5H2.5Z M0.8 3H7.2L6.8 10H1.2Z" fill="#fff"/><path d="M2.7 4V9M4 4V9M5.3 4V9" stroke="#f0a090" stroke-width=".7"/></svg></div>
<div class="a td num" style="left:-50.0px;top:366.1px;width:82.2px;">19923252773</div>
<div class="a td" style="left:32.2px;top:366.1px;width:102.3px;">普通用户</div>
<div class="a td" style="left:134.5px;top:366.1px;width:80.7px;">县代</div>
<div class="a td num" style="left:273.4px;top:366.1px;width:81.8px;">19923252773</div>
<div class="a td num" style="left:394.4px;top:366.1px;width:30.4px;">1</div>
<div class="a td num" style="left:424.8px;top:366.1px;width:29.9px;">0</div>
<div class="a td num" style="left:454.7px;top:366.1px;width:115.8px;">2021-07-20 17:54:22</div>
<div class="a td num" style="left:570.5px;top:366.1px;width:96.8px;color:#4288c2">106.84.190.243</div>
<div class="a td num" style="left:667.3px;top:366.1px;width:117.1px;">2021-07-15 15:52:10</div>
<div class="a td num" style="left:784.4px;top:366.1px;width:96.0px;color:#4288c2">113.251.234.239</div>
<div class="a" style="left:362.6px;top:360.4px;width:25.4px;height:25.4px;background:#a1cde6"><svg class="a" style="left:9.5px;top:7.8px" width="6" height="10" viewBox="0 0 6 10"><path d="M3.3 0.2H4.6V9.8H3.3V2.2Q2.3 3.2 0.6 3.6V2.4Q2.4 1.7 3.3 0.2Z" fill="#fff"/></svg></div>
<div class="a" style="left:887.6px;top:368.5px;width:9.4px;height:9.4px;border-radius:50%;background:#18bc9c"></div>
<div class="a td" style="left:900.5px;top:366.1px;color:#18bc9c">正常</div>
<div class="a" style="left:937.0px;top:364.1px;width:66px;height:18px;background:#3498db;border-radius:2px"><svg class="a" style="left:5px;top:4.5px" width="14" height="9" viewBox="0 0 14 9"><path d="M0 1.2H2.5V6H0Z M11.5 1.2H14V6H11.5Z" fill="#fff"/><path d="M2.5 2L5.5 0.8L8.5 1.2L11.5 2V5.5L8 8.2H6.5L2.5 5.5Z" fill="none" stroke="#fff" stroke-width="1.3"/><path d="M4.8 4L7 2L9.5 4.8" fill="none" stroke="#fff" stroke-width="1.2"/></svg><span class="a" style="left:20.8px;top:2.3px;color:#fff;font-size:10.3px;line-height:14px">我的推荐</span></div>
<div class="a" style="left:1006.5px;top:364.1px;width:19px;height:18px;background:#18bc9c;border-radius:2px"><svg class="a" style="left:5px;top:4px" width="9" height="10" viewBox="0 0 9 10"><path d="M0.5 9.5L1 7L6.5 1.3L8.5 3.3L3 9Z" fill="#fff"/></svg></div>
<div class="a" style="left:1028.0px;top:364.1px;width:19px;height:18px;background:#e74c3c;border-radius:2px"><svg class="a" style="left:5.5px;top:4px" width="8" height="10" viewBox="0 0 8 10"><path d="M0 1.5H8V2.6H0Z M2.5 0.3H5.5V1.5H2.5Z M0.8 3H7.2L6.8 10H1.2Z" fill="#fff"/><path d="M2.7 4V9M4 4V9M5.3 4V9" stroke="#f0a090" stroke-width=".7"/></svg></div>
<div class="a td num" style="left:-50.0px;top:405.8px;width:82.2px;">13865125836</div>
<div class="a td" style="left:32.2px;top:405.8px;width:102.3px;">普通用户</div>
<div class="a td" style="left:134.5px;top:405.8px;width:80.7px;">普通用户</div>
<div class="a td num" style="left:273.4px;top:405.8px;width:81.8px;">13865125836</div>
<div class="a td num" style="left:394.4px;top:405.8px;width:30.4px;">1</div>
<div class="a td num" style="left:424.8px;top:405.8px;width:29.9px;">0</div>
<div class="a td num" style="left:454.7px;top:405.8px;width:115.8px;">2021-07-15 15:31:02</div>
<div class="a td num" style="left:570.5px;top:405.8px;width:96.8px;color:#4288c2">39.144.38.165</div>
<div class="a td num" style="left:667.3px;top:405.8px;width:117.1px;">2021-07-15 15:28:44</div>
<div class="a td num" style="left:784.4px;top:405.8px;width:96.0px;color:#4288c2">39.144.38.165</div>
<div class="a" style="left:362.6px;top:400.1px;width:25.4px;height:25.4px;background:#a1e2a5"><svg class="a" style="left:9.5px;top:7.8px" width="6" height="10" viewBox="0 0 6 10"><path d="M3.3 0.2H4.6V9.8H3.3V2.2Q2.3 3.2 0.6 3.6V2.4Q2.4 1.7 3.3 0.2Z" fill="#fff"/></svg></div>
<div class="a" style="left:887.6px;top:408.2px;width:9.4px;height:9.4px;border-radius:50%;background:#18bc9c"></div>
<div class="a td" style="left:900.5px;top:405.8px;color:#18bc9c">正常</div>
<div class="a" style="left:937.0px;top:403.8px;width:66px;height:18px;background:#3498db;border-radius:2px"><svg class="a" style="left:5px;top:4.5px" width="14" height="9" viewBox="0 0 14 9"><path d="M0 1.2H2.5V6H0Z M11.5 1.2H14V6H11.5Z" fill="#fff"/><path d="M2.5 2L5.5 0.8L8.5 1.2L11.5 2V5.5L8 8.2H6.5L2.5 5.5Z" fill="none" stroke="#fff" stroke-width="1.3"/><path d="M4.8 4L7 2L9.5 4.8" fill="none" stroke="#fff" stroke-width="1.2"/></svg><span class="a" style="left:20.8px;top:2.3px;color:#fff;font-size:10.3px;line-height:14px">我的推荐</span></div>
<div class="a" style="left:1006.5px;top:403.8px;width:19px;height:18px;background:#18bc9c;border-radius:2px"><svg class="a" style="left:5px;top:4px" width="9" height="10" viewBox="0 0 9 10"><path d="M0.5 9.5L1 7L6.5 1.3L8.5 3.3L3 9Z" fill="#fff"/></svg></div>
<div class="a" style="left:1028.0px;top:403.8px;width:19px;height:18px;background:#e74c3c;border-radius:2px"><svg class="a" style="left:5.5px;top:4px" width="8" height="10" viewBox="0 0 8 10"><path d="M0 1.5H8V2.6H0Z M2.5 0.3H5.5V1.5H2.5Z M0.8 3H7.2L6.8 10H1.2Z" fill="#fff"/><path d="M2.7 4V9M4 4V9M5.3 4V9" stroke="#f0a090" stroke-width=".7"/></svg></div>
</div>
<div class="a" style="left:13px;top:488px;width:1040px;height:15px;background:#f1f1f1"></div>
<div class="a" style="left:210px;top:490px;width:818px;height:11px;background:#c1c1c1"></div>
<svg class="a" style="left:17px;top:491px" width="6" height="9" viewBox="0 0 6 9"><path d="M4.5 1V8L1 4.5Z" fill="#505050"/></svg>
<svg class="a" style="left:1044px;top:491px" width="6" height="9" viewBox="0 0 6 9"><path d="M1.5 1V8L5 4.5Z" fill="#505050"/></svg>
<div class="a td" style="left:13px;top:519px;text-align:left">显示第 1 到第 10 条记录，总共 86 条记录 每页显示</div>
<div class="a" style="left:266.6px;top:513.8px;width:42.4px;height:25.7px;background:#f4f4f4;border:1px solid #e3e3e3;border-radius:3px"><span class="a td" style="left:11px;top:6px">10</span><svg class="a" style="left:25px;top:10px" width="7" height="5" viewBox="0 0 7 5"><path d="M0.5 4.5L3.5 1L6.5 4.5Z" fill="#333"/></svg></div>
<div class="a td" style="left:312px;top:519px;text-align:left">条记录</div>
<div class="a" style="left:656.6px;top:511.4px;width:302.6px;height:27.1px;border:1px solid #e2e2e2;border-radius:3px;background:#fafafa"></div>
<div class="a td" style="left:656.6px;top:518px;width:54.2px;color:#666">上一页</div>
<div class="a" style="left:710.8px;top:511.4px;width:28.1px;height:27.1px;background:#2c3e50"></div>
<div class="a td" style="left:710.8px;top:518px;width:28.1px;color:#fff">1</div>
<div class="a" style="left:738.9px;top:511.4px;width:1px;height:27.1px;background:#e2e2e2"></div>
<div class="a td" style="left:738.9px;top:518px;width:26.8px;color:#666">2</div>
<div class="a" style="left:765.7px;top:511.4px;width:1px;height:27.1px;background:#e2e2e2"></div>
<div class="a td" style="left:765.7px;top:518px;width:27.5px;color:#666">3</div>
<div class="a" style="left:793.2px;top:511.4px;width:1px;height:27.1px;background:#e2e2e2"></div>
<div class="a td" style="left:793.2px;top:518px;width:27.1px;color:#666">4</div>
<div class="a" style="left:820.3px;top:511.4px;width:1px;height:27.1px;background:#e2e2e2"></div>
<div class="a td" style="left:820.3px;top:518px;width:27.1px;color:#666">5</div>
<div class="a" style="left:847.4px;top:511.4px;width:1px;height:27.1px;background:#e2e2e2"></div>
<div class="a td" style="left:847.4px;top:518px;width:30.0px;color:#bbb">...</div>
<div class="a" style="left:877.4px;top:511.4px;width:1px;height:27.1px;background:#e2e2e2"></div>
<div class="a td" style="left:877.4px;top:518px;width:28.1px;color:#666">9</div>
<div class="a" style="left:905.5px;top:511.4px;width:1px;height:27.1px;background:#e2e2e2"></div>
<div class="a td" style="left:905.5px;top:518px;width:53.7px;color:#666">下一页</div>
<div class="a" style="left:964px;top:511.4px;width:42.7px;height:27px;border:1px solid #d9dde3;background:#fff"></div>
<div class="a" style="left:1011px;top:512px;width:42px;height:26.5px;border:1px solid #e0e0e0;border-radius:3px;background:#f4f4f4"><span class="a td" style="left:0;top:6.5px;width:40px;color:#444;font-size:10.3px">跳转</span></div>
</div></div>
<div id="vscroll"><div class="a" style="left:2px;top:14px;width:11px;height:537px;background:#c1c1c1"></div><svg class="a" style="left:3px;top:4px" width="9" height="6" viewBox="0 0 9 6"><path d="M0.5 5L4.5 1L8.5 5Z" fill="#a3a3a3"/></svg><svg class="a" style="left:3px;top:565px" width="9" height="6" viewBox="0 0 9 6"><path d="M0.5 1L4.5 5L8.5 1Z" fill="#505050"/></svg></div>
</body></html>
